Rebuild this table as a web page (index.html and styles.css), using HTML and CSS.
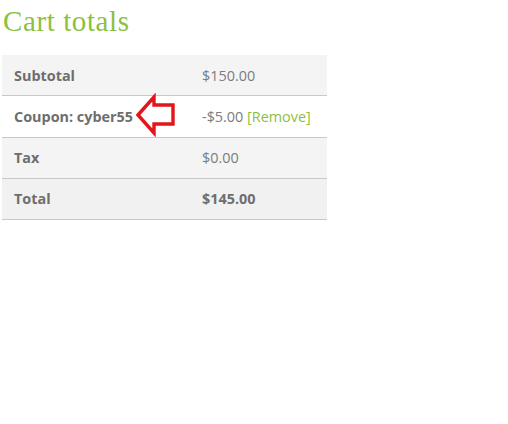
FILE: index.html
```html
<!DOCTYPE html>
<html>
<head>
<meta charset="utf-8">
<link rel="stylesheet" href="styles.css">
</head>
<body>
<div class="cart">
  <h2 class="title">Cart totals</h2>
  <table class="totals">
    <tr class="row odd"><th>Subtotal</th><td>$150.00</td></tr>
    <tr class="row coupon"><th><span class="label">Coupon: cyber55</span>
      <svg class="arrow" width="42" height="44" viewBox="0 0 42 44"><path d="M3 22 L19 4 L19 12 L38 12 L38 31 L19 31 L19 40 Z" fill="#fff" stroke="#e3141b" stroke-width="3.4" stroke-linejoin="miter"/></svg>
    </th><td>-$5.00 <a class="remove" href="#">[Remove]</a></td></tr>
    <tr class="row odd"><th>Tax</th><td>$0.00</td></tr>
    <tr class="row total"><th>Total</th><td><strong>$145.00</strong></td></tr>
  </table>
</div>
</body>
</html>
```
FILE: styles.css
```css
html, body { margin: 0; padding: 0; background: #fff; }
.cart { padding: 0 2px; width: 325px; }
.title {
  font-family: "Liberation Serif", Georgia, serif;
  font-weight: normal;
  color: #8cc03f;
  font-size: 29px;
  line-height: 34px;
  letter-spacing: 0.6px;
  margin: 0;
  padding: 4px 0 0 1px;
  height: 55px;
  box-sizing: border-box;
}
.totals {
  border-collapse: collapse;
  width: 325px;
  font-family: "Open Sans", sans-serif;
  font-size: 14.4px;
}
.row th, .row td {
  height: 40.25px;
  padding: 0 12px;
  border-bottom: 1px solid #c8c8c8;
  text-align: left;
  vertical-align: middle;
}
.row th { font-weight: bold; color: #6e6e6e; width: 164px; position: relative; }
.row td { color: #7a7c80; }
.odd { background: #f4f4f4; }
.coupon { background: #fff; }
.total { background: #f1f1f1; }
.total td strong { color: #6e6e6e; }
.remove { color: #8cc03f; text-decoration: none; }
.arrow { position: absolute; left: 133px; top: -3px; }
```
